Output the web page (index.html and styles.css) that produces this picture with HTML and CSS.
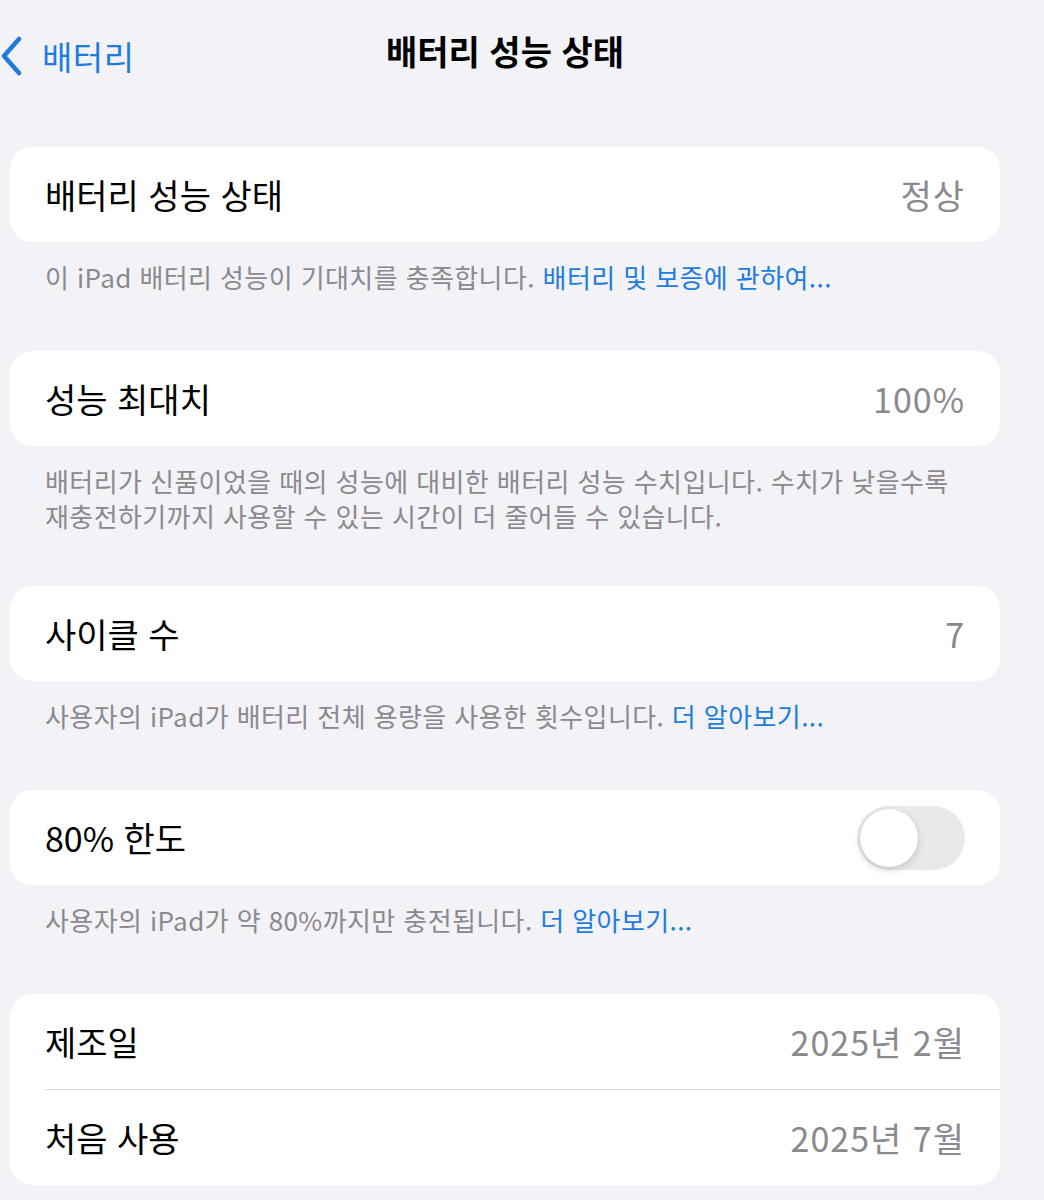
FILE: index.html
```html
<!DOCTYPE html>
<html lang="ko">
<head>
    <meta charset="UTF-8">
    <title>배터리 성능 상태</title>
    <link rel="stylesheet" href="styles.css">
</head>
<body>
    <div class="page">
        <div class="navbar">
            <a class="back" href="#">
                <svg class="chevron" width="22" height="40" viewBox="0 0 22 40">
                    <path d="M19 3 L4 20 L19 37" fill="none" stroke="#1c7ce0" stroke-width="4.5" stroke-linecap="round" stroke-linejoin="round"/>
                </svg>
                <span>배터리</span>
            </a>
            <h1 class="title">배터리 성능 상태</h1>
        </div>

        <div class="group">
            <div class="row">
                <span class="label">배터리 성능 상태</span>
                <span class="value">정상</span>
            </div>
        </div>
        <p class="footer">이 iPad 배터리 성능이 기대치를 충족합니다. <a href="#">배터리 및 보증에 관하여...</a></p>

        <div class="group">
            <div class="row">
                <span class="label">성능 최대치</span>
                <span class="value">100%</span>
            </div>
        </div>
        <p class="footer long">배터리가 신품이었을 때의 성능에 대비한 배터리 성능 수치입니다. 수치가 낮을수록 재충전하기까지 사용할 수 있는 시간이 더 줄어들 수 있습니다.</p>

        <div class="group">
            <div class="row">
                <span class="label">사이클 수</span>
                <span class="value">7</span>
            </div>
        </div>
        <p class="footer">사용자의 iPad가 배터리 전체 용량을 사용한 횟수입니다. <a href="#">더 알아보기...</a></p>

        <div class="group">
            <div class="row">
                <span class="label">80% 한도</span>
                <span class="switch"><span class="knob"></span></span>
            </div>
        </div>
        <p class="footer">사용자의 iPad가 약 80%까지만 충전됩니다. <a href="#">더 알아보기...</a></p>

        <div class="group">
            <div class="row">
                <span class="label">제조일</span>
                <span class="value">2025년 2월</span>
            </div>
            <div class="row">
                <span class="label">처음 사용</span>
                <span class="value">2025년 7월</span>
            </div>
        </div>
    </div>
</body>
</html>
```

FILE: styles.css
```css
body {
    margin: 0;
    background-color: #f2f2f7;
    font-family: "Noto Sans CJK KR", "Noto Sans", sans-serif;
    color: #000;
}

.page {
    width: 990px;
    padding-left: 10px;
}

.navbar {
    height: 147px;
    display: flex;
    justify-content: center;
    position: relative;
}

.back {
    position: absolute;
    left: -10px;
    top: 32px;
    display: flex;
    align-items: center;
    gap: 20px;
    color: #1c7ce0;
    text-decoration: none;
    font-size: 33px;
    letter-spacing: 0.5px;
}

.chevron {
    display: block;
}

.title {
    margin: 28px 0 0 0;
    font-size: 34px;
    font-weight: 700;
    line-height: 46px;
    height: 46px;
}

.group {
    background-color: #fff;
    border-radius: 22px;
    overflow: hidden;
}

.row {
    height: 95px;
    display: flex;
    align-items: center;
    justify-content: space-between;
    padding: 0 35px;
    font-size: 34px;
}

.row + .row {
    border-top: 1px solid #d6d6d9;
    margin-left: 35px;
    padding-left: 0;
}

.value {
    color: #8a8a8e;
    letter-spacing: 1px;
}

.switch {
    width: 108px;
    height: 64px;
    border-radius: 32px;
    background-color: #e9e9eb;
    display: flex;
    align-items: center;
    padding: 0 3px;
    box-sizing: border-box;
}

.knob {
    width: 58px;
    height: 58px;
    border-radius: 50%;
    background-color: #fff;
    box-shadow: 0 3px 8px rgba(0, 0, 0, 0.15), 0 0 1px rgba(0, 0, 0, 0.1);
}

.footer {
    margin: 0 0 57px 0;
    padding: 17px 35px 0 35px;
    font-size: 26px;
    line-height: 35px;
    letter-spacing: 0.4px;
    color: #8a8a8e;
}

.footer.long {
    margin-bottom: 53px;
}

.footer a {
    color: #1c7ce0;
    text-decoration: none;
}
```
